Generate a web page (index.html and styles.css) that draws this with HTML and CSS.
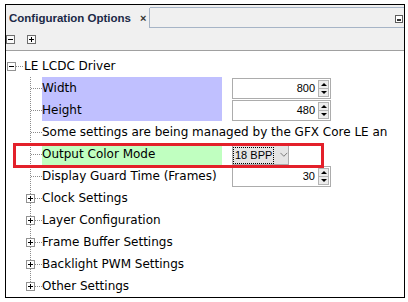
FILE: index.html
```html
<!DOCTYPE html>
<html lang="en">

<head>
    <meta charset="UTF-8">
    <title>Configuration Options</title>
    <link rel="stylesheet" href="styles.css">
</head>

<body>
    <div class="panel">
        <!-- Tab header -->
        <div class="titlebar">
            <div class="tab">
                <span class="tab-title">Configuration Options</span>
                <span class="tab-close">×</span>
            </div>
            <div class="tab-rest"><span class="minimize"></span></div>
        </div>

        <!-- Collapse / expand all -->
        <div class="toolbar">
            <span class="tool-btn minus"></span>
            <span class="tool-btn plus"></span>
        </div>

        <!-- Tree -->
        <div class="tree">
            <div class="row root">
                <span class="toggle open"></span><span class="dash"></span>
                <span class="label">LE LCDC Driver</span>
            </div>
            <div class="children">
                <div class="row">
                    <span class="twig"><span class="hline"></span></span>
                    <span class="prop blue">Width</span>
                    <div class="spinner"><span class="value">800</span><span class="arrows"><span class="arrow up"></span><span class="arrow down"></span></span></div>
                </div>
                <div class="row">
                    <span class="twig"><span class="hline"></span></span>
                    <span class="prop blue">Height</span>
                    <div class="spinner"><span class="value">480</span><span class="arrows"><span class="arrow up"></span><span class="arrow down"></span></span></div>
                </div>
                <div class="row">
                    <span class="twig"><span class="hline"></span></span>
                    <span class="label">Some settings are being managed by the GFX Core LE an</span>
                </div>
                <div class="row marked">
                    <span class="twig"><span class="hline"></span></span>
                    <span class="prop green">Output Color Mode</span>
                    <div class="combo"><span class="combo-text">18 BPP</span>
                        <svg class="chevron" width="9" height="6" viewBox="0 0 9 6"><path d="M0.5 0.5 L4.5 4.5 L8.5 0.5" fill="none" stroke="#6a6a6a" stroke-width="1"/></svg>
                    </div>
                </div>
                <div class="row">
                    <span class="twig"><span class="hline"></span></span>
                    <span class="prop">Display Guard Time (Frames)</span>
                    <div class="spinner"><span class="value">30</span><span class="arrows"><span class="arrow up"></span><span class="arrow down"></span></span></div>
                </div>
                <div class="row">
                    <span class="twig"><span class="toggle"></span><span class="hline short"></span></span>
                    <span class="label">Clock Settings</span>
                </div>
                <div class="row">
                    <span class="twig"><span class="toggle"></span><span class="hline short"></span></span>
                    <span class="label">Layer Configuration</span>
                </div>
                <div class="row">
                    <span class="twig"><span class="toggle"></span><span class="hline short"></span></span>
                    <span class="label">Frame Buffer Settings</span>
                </div>
                <div class="row">
                    <span class="twig"><span class="toggle"></span><span class="hline short"></span></span>
                    <span class="label">Backlight PWM Settings</span>
                </div>
                <div class="row last">
                    <span class="twig"><span class="toggle"></span><span class="hline short"></span></span>
                    <span class="label">Other Settings</span>
                </div>
            </div>
        </div>
    </div>
</body>

</html>
```

FILE: styles.css
```css
body {
    margin: 0;
    background-color: #fff;
    font-family: "DejaVu Sans", sans-serif;
    font-size: 12px;
    color: #000;
}

.panel {
    margin: 4px 0 0 5px;
    width: 398px;
    height: 292px;
    border: 1px solid #000;
    overflow: hidden;
    background-color: #fff;
}

/* header */
.titlebar {
    display: flex;
    height: 23px;
    background-color: #f0f0f0;
}

.tab {
    display: flex;
    align-items: center;
    width: 144px;
    padding-left: 3px;
    box-sizing: border-box;
    border-right: 1px solid #a6b4c6;
    margin-top: 3px;
}

.tab-title {
    font-family: "Liberation Sans", Arial, sans-serif;
    font-weight: bold;
    font-size: 11.5px;
    color: #1b2947;
}

.tab-close {
    font-family: "Liberation Sans", Arial, sans-serif;
    font-weight: bold;
    font-size: 11px;
    color: #333;
    margin-left: 9px;
}

.tab-rest {
    flex: 1;
    display: flex;
    justify-content: flex-end;
    align-items: flex-start;
    margin-top: 2px;
    border-top: 1px solid #a6b4c6;
    border-bottom: 1px solid #a6b4c6;
    padding-right: 1px;
}

.minimize {
    width: 8px;
    height: 8px;
    box-sizing: border-box;
    margin-top: 7px;
    border: 1px solid #5c5c5c;
    background: linear-gradient(#333, #333) 1px 3px / 4px 2px no-repeat, #fff;
}

/* toolbar */
.toolbar {
    display: flex;
    align-items: center;
    height: 22px;
    background-color: #f0f0f0;
    border-bottom: 1px solid #a0a0a0;
}

.tool-btn {
    width: 9px;
    height: 9px;
    box-sizing: border-box;
    border: 1px solid #6d6d6d;
    background: linear-gradient(#000, #000) center / 5px 1px no-repeat, #fafafa;
}

.tool-btn.plus {
    margin-left: 12px;
    background: linear-gradient(#000, #000) center / 5px 1px no-repeat,
        linear-gradient(#000, #000) center / 1px 5px no-repeat, #fafafa;
}

/* tree */
.tree {
    padding-top: 4px;
    white-space: nowrap;
}

.row {
    display: flex;
    align-items: center;
    height: 22px;
}

.root {
    padding-left: 1px;
}

.children {
    padding-left: 20px;
}

.toggle {
    flex: none;
    width: 9px;
    height: 9px;
    box-sizing: border-box;
    border: 1px solid #929292;
    background: linear-gradient(#000, #000) center / 5px 1px no-repeat,
        linear-gradient(#000, #000) center / 1px 5px no-repeat, #fff;
}

.toggle.open {
    background: linear-gradient(#000, #000) center / 5px 1px no-repeat, #fff;
}

.dash,
.hline {
    height: 1px;
    background: repeating-linear-gradient(to right, #8c8c8c 0 1px, transparent 1px 2px);
}

.dash {
    width: 7px;
    margin-right: 1px;
}

.twig {
    flex: none;
    display: flex;
    align-items: center;
    width: 16px;
    height: 22px;
    background: repeating-linear-gradient(to bottom, #8c8c8c 0 1px, transparent 1px 2px) 4px 0 / 1px 100% no-repeat;
}

.last .twig {
    background-size: 1px 11px;
}

.hline {
    width: 11px;
    margin-left: 5px;
}

.hline.short {
    width: 7px;
    margin-left: 0;
}

.prop {
    flex: none;
    display: flex;
    align-items: center;
    align-self: stretch;
    width: 180px;
}

.prop.blue {
    background-color: #c0c0ff;
}

.prop.green {
    background-color: #c0ffc0;
}

/* value editors */
.spinner {
    display: flex;
    align-self: flex-start;
    margin: 1px 0 0 10px;
    width: 99px;
    height: 21px;
    box-sizing: border-box;
    border: 1px solid #acacac;
    background-color: #fff;
    font-family: "Liberation Sans", Arial, sans-serif;
    font-size: 11px;
}

.value {
    flex: 1;
    text-align: right;
    padding-right: 3px;
    line-height: 19px;
}

.arrows {
    display: flex;
    flex-direction: column;
    width: 11px;
    margin: 1px 1px 1px 0;
}

.arrow {
    flex: 1;
    display: flex;
    align-items: center;
    justify-content: center;
    border: 1px solid #b4b4b4;
    background-color: #ececec;
}

.arrow + .arrow {
    margin-top: -1px;
}

.arrow::before {
    content: "";
    border-left: 3px solid transparent;
    border-right: 3px solid transparent;
}

.arrow.up::before {
    border-bottom: 3px solid #000;
}

.arrow.down::before {
    border-top: 3px solid #000;
}

.combo {
    display: flex;
    align-items: center;
    align-self: flex-start;
    margin: 2px 0 0 10px;
    width: 57px;
    height: 20px;
    box-sizing: border-box;
    border: 1px solid #acacac;
    background-color: #e5e5e5;
    padding-left: 1px;
    font-family: "Liberation Sans", Arial, sans-serif;
    font-size: 11px;
}

.combo-text {
    outline: 1px dotted #000;
    padding: 1px 1px;
    line-height: 13px;
}

.chevron {
    margin-left: 7px;
}

/* annotation */
.marked {
    position: relative;
}

.marked::after {
    content: "";
    position: absolute;
    left: -13px;
    top: 0;
    width: 311px;
    height: 25px;
    box-sizing: border-box;
    border: 3px solid #e3202a;
}
```
